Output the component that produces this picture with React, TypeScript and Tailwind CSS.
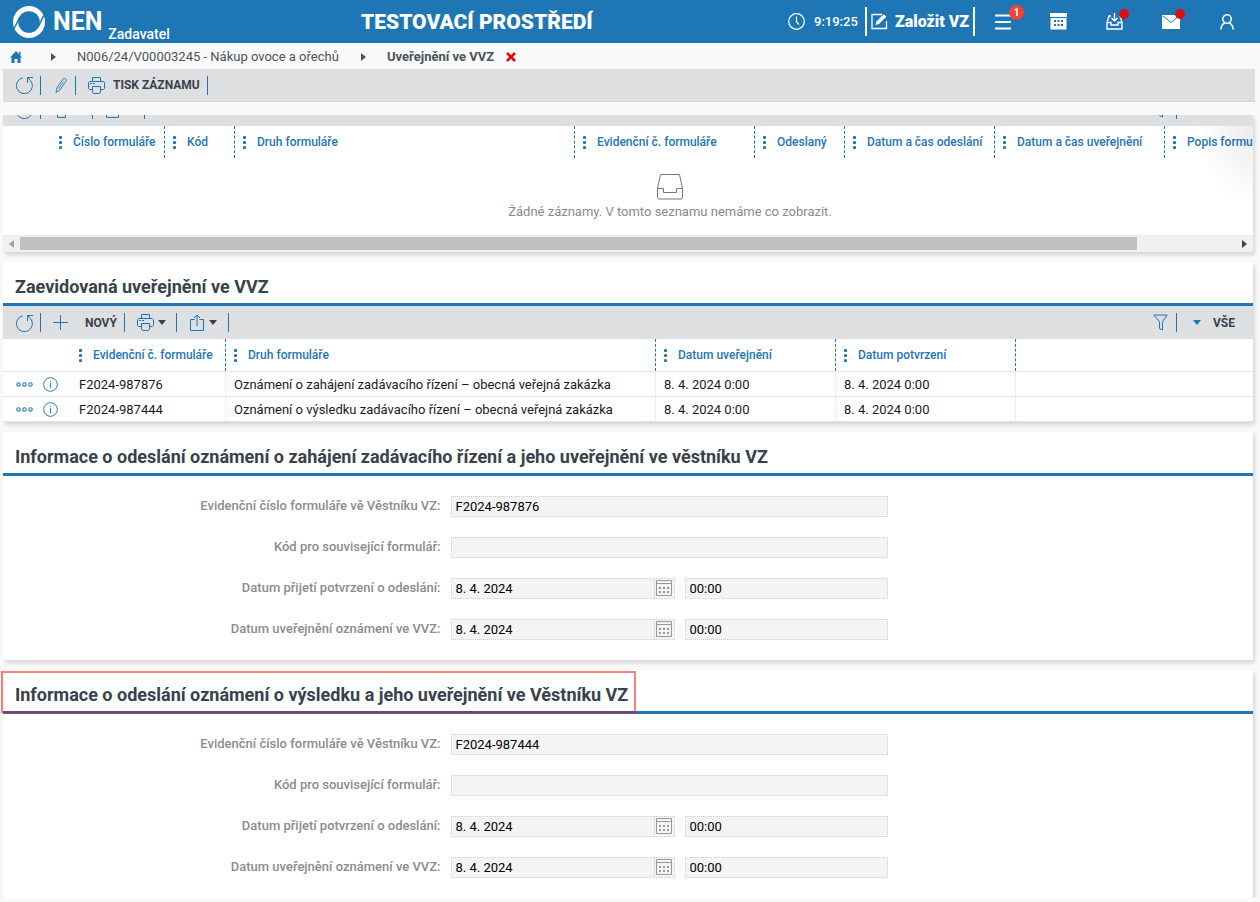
import React from "react";

type IconProps = { className?: string };

function RefreshIcon({ className = "" }: IconProps) {
  return (
    <svg width="18" height="18" viewBox="0 0 18 18" fill="none" stroke="currentColor" className={`shrink-0 ${className}`}>
      <path d="M6.6 1.9A8 8 0 1 0 14.2 4.2L11.5 1.5" />
      <path d="M17 1.5h-5.5v5.5" />
    </svg>
  );
}

function PencilIcon() {
  return (
    <svg width="12" height="17" viewBox="0 0 13 17" fill="none" stroke="currentColor" className="shrink-0">
      <path d="M1 16l1-4.8L8.6 1.6a1.9 1.9 0 0 1 2.8-.3 1.9 1.9 0 0 1 .3 2.7L5.2 13.4z" />
      <path d="M9.2 4.2L3.8 12" strokeWidth=".8" />
    </svg>
  );
}

function PrinterIcon() {
  return (
    <svg width="17" height="17" viewBox="0 0 17 17" fill="none" stroke="currentColor" className="shrink-0">
      <path d="M4.5 4.5v-4h8v4M4.5 12.5h-3l-1-1v-6l1-1h14l1 1v6l-1 1h-3" />
      <path d="M4.5 9.5h8v5.5l-1 1.5h-6l-1-1.500zM2 6.500h2M5 6.500h2" />
    </svg>
  );
}

function PlusIcon() {
  return (
    <svg width="15" height="15" viewBox="0 0 15 15" fill="none" stroke="currentColor" className="shrink-0">
      <path d="M7.5 0v15M0 7.5h15" />
    </svg>
  );
}

function ShareIcon() {
  return (
    <svg width="14" height="17" viewBox="0 0 14 17" fill="none" stroke="currentColor" className="shrink-0">
      <path d="M4.5 5.5H.5v11h13v-11h-4M7 12V1M4 4l3-3 3 3" />
    </svg>
  );
}

function FunnelIcon() {
  return (
    <svg width="15" height="17" viewBox="0 0 15 17" fill="none" stroke="currentColor" className="shrink-0">
      <path d="M.8 1h13.4L9.5 7.5v8.500l-3-1.500V7.500z" />
    </svg>
  );
}

function Caret({ className = "" }: IconProps) {
  return (
    <svg width="8" height="5" viewBox="0 0 8 5" className={`shrink-0 ${className}`} fill="currentColor">
      <path d="M0 0h8L4 5z" />
    </svg>
  );
}

function RightArrow({ className = "" }: IconProps) {
  return (
    <svg width="5" height="8" viewBox="0 0 5 8" className={`shrink-0 ${className}`} fill="currentColor">
      <path d="M0 0l5 4-5 4z" />
    </svg>
  );
}

function DotsHandle() {
  return (
    <svg width="3" height="13" viewBox="0 0 3 13" fill="currentColor" className="shrink-0">
      <circle cx="1.5" cy="1.5" r="1.6" />
      <circle cx="1.5" cy="6.5" r="1.6" />
      <circle cx="1.5" cy="11.5" r="1.6" />
    </svg>
  );
}

function Divider({ className = "" }: IconProps) {
  return <span className={`h-[19px] w-px shrink-0 bg-[#1e76b5] ${className}`} />;
}

function Header() {
  return (
    <header className="flex h-[43px] shrink-0 items-center bg-[#1e76b5] text-white">
      <a href="#" className="flex h-full w-[361px] items-center pl-3">
        <svg width="34" height="34" viewBox="0 0 34 34" className="shrink-0">
          <circle cx="17" cy="17" r="16" fill="#fff" />
          <circle cx="17" cy="17" r="10.8" fill="#1e76b5" />
          <path d="M1 24.500C4.500 21.500 4.500 17 8 12" stroke="#1e76b5" strokeWidth="1.400" fill="none" />
          <path d="M33 9.500C29.500 12.500 29.500 17 26 22" stroke="#1e76b5" strokeWidth="1.400" fill="none" />
        </svg>
        <span className="ml-[7px] text-[25px] font-bold leading-8">NEN</span>
        <span className="ml-1.5 mt-6 text-sm font-medium leading-5">Zadavatel</span>
      </a>
      <div className="whitespace-nowrap text-[21px] font-black leading-7">TESTOVACÍ PROSTŘEDÍ</div>
      <div className="ml-auto flex items-center">
        <svg width="17" height="17" viewBox="0 0 17 17" fill="none" stroke="#fff" strokeWidth="1.2">
          <circle cx="8.5" cy="8.5" r="7.8" />
          <path d="M8.5 3.5v5.5l2.5 2.5" />
        </svg>
        <span className="ml-[9px] w-[51px] whitespace-nowrap text-[13px] font-medium">9:19:25</span>
        <button className="flex h-[29px] w-[110px] items-center justify-between whitespace-nowrap border-x-2 border-white px-1 text-base font-black">
          <svg width="17" height="17" viewBox="0 0 17 17" className="shrink-0">
            <path d="M11 1.5H1v14h14.500V8" fill="none" stroke="#fff" strokeWidth="1.3" />
            <path d="M4.5 12l1-3.500L12.800 1.200l2.500 2.500L8 11z" fill="#fff" />
          </svg>
          Založit VZ
        </button>
        <button aria-label="Menu" className="relative ml-5 flex h-8 w-[17px] items-center">
          <svg width="17" height="16" viewBox="0 0 17 16" stroke="#fff" strokeWidth="1.8">
            <path d="M0 1.5h16M0 8h16M0 14.5h16" />
          </svg>
          <span className="absolute -top-px left-[14px] flex size-[15px] items-center justify-center rounded-full bg-[#f44336] text-[10px] font-bold">1</span>
        </button>
        <button aria-label="Kalendář" className="ml-[38px]">
          <svg width="17" height="17" viewBox="0 0 17 17" fill="#fff">
            <path d="M0 0h17v4H0zM.5 5h16v11.500H.5z" />
            <path d="M4 7h2v2H4zM7.500 7h2v2h-2zM11 7h2v2h-2zM4 11h2v2H4zM7.500 11h2v2h-2zM11 11h2v2h-2z" fill="#1e76b5" />
          </svg>
        </button>
        <button aria-label="Doručené" className="relative ml-[39px] w-[18px]">
          <svg width="18" height="17" viewBox="0 0 18 17" fill="none" stroke="#fff" strokeWidth="1.4">
            <path d="M5 3H3L1 9.500v6.500h15V9.500L14 3M1 9.500h4v2.500h7V9.500h4M8.500 0v8M5.500 5l3 3 3-3" />
          </svg>
          <span className="absolute -top-1 left-[13px] size-2.5 rounded-full bg-[#dc0d15]" />
        </button>
        <button aria-label="Zprávy" className="relative ml-[38px] w-[18px]">
          <svg width="18" height="14" viewBox="0 0 18 14">
            <path d="M0 0h18v14H0z" fill="#fff" />
            <path d="M1 1l8 6.500L17 1" fill="none" stroke="#1e76b5" />
          </svg>
          <span className="absolute -top-1.5 left-[13px] size-2.5 rounded-full bg-[#dc0d15]" />
        </button>
        <button aria-label="Uživatel" className="ml-10 mr-[26px]">
          <svg width="14" height="16" viewBox="0 0 14 16" fill="none" stroke="#fff" strokeWidth="1.5">
            <circle cx="7" cy="5" r="4.2" />
            <path d="M1 15.500c0-4 1.500-5.500 4-6.700M13 15.500c0-4-1.500-5.500-4-6.700" />
          </svg>
        </button>
      </div>
    </header>
  );
}

function Breadcrumb() {
  return (
    <nav className="flex h-[26px] shrink-0 items-center pt-0.5 text-[13px] text-[#4a545c]">
      <a href="#" aria-label="Domů" className="ml-2.5 text-[#1e76b5]">
        <svg width="12" height="12" viewBox="0 0 12 12" fill="currentColor">
          <path d="M6 0l6 6.500h-1.500V12h-3V8h-3v4h-3V6.500H0L6 0zM9 .8h1.500V5L9 3.500z" />
        </svg>
      </a>
      <RightArrow className="ml-[29px]" />
      <a href="#" className="ml-[21px] w-[263px] whitespace-nowrap">
        N006/24/V00003245 - Nákup ovoce a ořechů
      </a>
      <RightArrow className="ml-[21px]" />
      <span className="ml-[21px] w-[107px] whitespace-nowrap font-bold">Uveřejnění ve VVZ</span>
      <button aria-label="Zavřít" className="ml-3">
        <svg width="10" height="10" viewBox="0 0 10 10" stroke="#f00000" strokeWidth="2.6">
          <path d="M1 1l8 8M9 1L1 9" />
        </svg>
      </button>
    </nav>
  );
}

type Column = { label: string; width: string };

function HeaderCell({ label }: { label: string }) {
  return (
    <span className="flex items-center gap-[11px] whitespace-nowrap pl-2 text-xs font-medium text-[#1e76b5]">
      <DotsHandle />
      {label}
    </span>
  );
}

const sentColumns: Column[] = [
  { label: "Číslo formuláře", width: "w-[114px]" },
  { label: "Kód", width: "w-[70px]" },
  { label: "Druh formuláře", width: "w-[340px]" },
  { label: "Evidenční č. formuláře", width: "w-[180px]" },
  { label: "Odeslaný", width: "w-[90px]" },
  { label: "Datum a čas odeslání", width: "w-[150px]" },
  { label: "Datum a čas uveřejnění", width: "w-[170px]" },
  { label: "Popis formuláře", width: "w-[172px]" },
];

function SentForms() {
  return (
    <section className="relative bg-white shadow-[2px_3px_4px_rgba(0,0,0,0.14)]">
      <div className="flex h-[11px] items-end overflow-hidden bg-[#dedfe1]">
        <div className="flex h-[33px] w-full shrink-0 items-center pl-[13px] text-[#1e76b5]">
          <RefreshIcon />
          <Divider className="ml-1.5" />
          <svg width="9" height="17" viewBox="0 0 9 17" fill="none" stroke="currentColor" className="ml-4">
            <path d="M.5 0v16.500h8V0" />
          </svg>
          <Divider className="ml-[26px]" />
          <svg width="13" height="17" viewBox="0 0 13 17" fill="none" stroke="currentColor" className="ml-[13px]">
            <path d="M.5 0v16.500h12V0" />
          </svg>
          <Divider className="ml-[25px]" />
          <span className="ml-auto">
            <FunnelIcon />
          </span>
          <Divider className="ml-2 mr-[76px]" />
        </div>
      </div>
      <div className="overflow-hidden">
        <div className="w-[1334px]">
          <table className="w-full table-fixed border-separate border-spacing-0">
            <thead>
              <tr className="h-8">
                <th className="w-12 p-0" />
                {sentColumns.map((c) => (
                  <th key={c.label} className={`${c.width} border-r border-dashed border-[#1e76b5] p-0`}>
                    <HeaderCell label={c.label} />
                  </th>
                ))}
              </tr>
            </thead>
          </table>
          <div className="flex h-[77px] flex-col items-center pt-4 text-[13px] leading-4 text-[#8a8a8a]">
            <svg width="26" height="26" viewBox="0 0 26 26" fill="none" stroke="#777" className="mb-1 shrink-0">
              <path d="M.5 14.500L3.500.5h19l3 14v9l-1 1.500h-23l-1-1.500zM.5 14.500h6v4h13v-4h6" />
            </svg>
            <p>Žádné záznamy. V tomto seznamu nemáme co zobrazit.</p>
          </div>
        </div>
      </div>
      <div className="flex h-[17px] items-center bg-[#f0f0f0]">
        <RightArrow className="ml-1.5 mr-1.5 rotate-180 text-[#a0a0a0]" />
        <div className="flex-1">
          <div className="h-[13px] w-[92%] bg-[#c1c1c1]" />
        </div>
        <RightArrow className="ml-2 mr-1.5 text-[#404040]" />
      </div>
      <div className="pointer-events-none absolute right-0 top-[11px] h-20 w-14 bg-[radial-gradient(ellipse_at_top_right,rgba(0,0,0,0.08),transparent_70%)]" />
    </section>
  );
}

function SectionTitle({ children, marked = false }: { children: React.ReactNode; marked?: boolean }) {
  return (
    <h2 className="flex h-11 items-center border-b-3 border-[#1e76b5] pl-3 pt-2 text-lg font-bold text-[#37424c]">
      <span className="relative whitespace-nowrap">
        {children}
        {marked && <span className="absolute -bottom-1 -left-3.5 -right-2 -top-2.5 border-2 border-[#ff0000]/50" />}
      </span>
    </h2>
  );
}

const rows = [
  ["F2024-987876", "Oznámení o zahájení zadávacího řízení – obecná veřejná zakázka"],
  ["F2024-987444", "Oznámení o výsledku zadávacího řízení – obecná veřejná zakázka"],
];

const registeredColumns: Column[] = [
  { label: "Evidenční č. formuláře", width: "w-[155px]" },
  { label: "Druh formuláře", width: "w-[430px]" },
  { label: "Datum uveřejnění", width: "w-[180px]" },
  { label: "Datum potvrzení", width: "w-[180px]" },
];

function RegisteredForms() {
  return (
    <section className="bg-white shadow-[2px_3px_4px_rgba(0,0,0,0.14)]">
      <SectionTitle>Zaevidovaná uveřejnění ve VVZ</SectionTitle>
      <div className="flex h-[33px] items-center bg-[#dedfe1] pl-[13px] text-xs font-bold text-[#37424c]">
        <button aria-label="Obnovit" className="text-[#1e76b5]">
          <RefreshIcon />
        </button>
        <Divider className="ml-1.5" />
        <button className="ml-3 flex items-center gap-[17px]">
          <span className="text-[#1e76b5]">
            <PlusIcon />
          </span>
          NOVÝ
        </button>
        <Divider className="ml-[7px]" />
        <button aria-label="Tisk" className="ml-3 flex items-center gap-1">
          <span className="text-[#1e76b5]">
            <PrinterIcon />
          </span>
          <Caret />
        </button>
        <Divider className="ml-2.5" />
        <button aria-label="Export" className="ml-[13px] flex items-center gap-[5px]">
          <span className="text-[#1e76b5]">
            <ShareIcon />
          </span>
          <Caret />
        </button>
        <Divider className="ml-[11px]" />
        <button aria-label="Filtr" className="ml-auto text-[#1e76b5]">
          <FunnelIcon />
        </button>
        <Divider className="ml-2" />
        <button className="ml-4 mr-[18px] flex items-center gap-3">
          <Caret className="text-[#1e76b5]" />
          VŠE
        </button>
      </div>
      <table className="w-full table-fixed border-separate border-spacing-0 text-[13px] text-[#1a1a1a]">
        <thead>
          <tr className="h-[33px]">
            <th className="w-[68px] border-b border-[#dce7eb] p-0" />
            {registeredColumns.map((c) => (
              <th key={c.label} className={`${c.width} border-b border-[#dce7eb] p-0`}>
                <div className="flex h-8 items-center border-r border-dashed border-[#1e76b5]">
                  <HeaderCell label={c.label} />
                </div>
              </th>
            ))}
            <th className="border-b border-[#dce7eb] p-0" />
          </tr>
        </thead>
        <tbody>
          {rows.map(([id, kind]) => (
            <tr key={id} className="h-[25px]">
              <td className="border-b border-[#dce7eb] p-0">
                <span className="flex items-center gap-2.5 pl-[13px] text-[#1e76b5]">
                  <button aria-label="Akce">
                    <svg width="17" height="5" viewBox="0 0 17 5" fill="none" stroke="currentColor" strokeWidth="1.1">
                      <circle cx="2.5" cy="2.5" r="1.7" />
                      <circle cx="8.5" cy="2.5" r="1.7" />
                      <circle cx="14.5" cy="2.5" r="1.7" />
                    </svg>
                  </button>
                  <button aria-label="Detail">
                    <svg width="15" height="15" viewBox="0 0 16 16" fill="none" stroke="currentColor">
                      <circle cx="8" cy="8" r="7.3" />
                      <path d="M8 6.5v5.5M8 4v1.2" />
                    </svg>
                  </button>
                </span>
              </td>
              {[id, kind, "8. 4. 2024 0:00", "8. 4. 2024 0:00"].map((text, i) => (
                <td key={i} className="whitespace-nowrap border-b border-[#dce7eb] p-0">
                  <div className="flex h-6 items-center border-r border-dotted border-[#dce3e6] pl-2 pt-0.5">{text}</div>
                </td>
              ))}
              <td className="border-b border-[#dce7eb] p-0" />
            </tr>
          ))}
        </tbody>
      </table>
    </section>
  );
}

const box = "h-[21px] border border-dotted border-[#cfcfcf] bg-[#f4f4f4] px-1 text-[13px] text-black outline-none";

function CalendarIcon() {
  return (
    <svg width="16" height="16" viewBox="0 0 16 16" fill="none" stroke="#999">
      <path d="M.5.5h15v15H.5zM.5 3.500h15" />
      <path d="M3 8h10M3 12h10" strokeWidth="2" strokeDasharray="2 2" />
    </svg>
  );
}

function Field({ id, label, children }: { id: string; label: string; children: React.ReactNode }) {
  return (
    <div className="grid grid-cols-[35%_35%] gap-x-2.5">
      <label htmlFor={id} className="whitespace-nowrap text-right text-[13px] font-medium leading-5 text-[#8c8c8c]">
        {label}
      </label>
      {children}
    </div>
  );
}

function DateFields({ id }: { id: string }) {
  return (
    <div className="flex gap-2.5">
      <div className="flex w-[224px]">
        <input id={id} readOnly defaultValue="8. 4. 2024" className={`${box} min-w-0 flex-1 border-r-0`} />
        <button aria-label="Vybrat datum" className="flex h-[21px] w-[21px] items-start border border-dotted border-[#cfcfcf] bg-[#f4f4f4] pl-px pt-px">
          <CalendarIcon />
        </button>
      </div>
      <input aria-label="Čas" readOnly defaultValue="00:00" className={`${box} min-w-0 flex-1`} />
    </div>
  );
}

function NoticeSection({ id, title, number, marked }: { id: string; title: string; number: string; marked?: boolean }) {
  return (
    <section className="bg-white shadow-[2px_3px_4px_rgba(0,0,0,0.14)]">
      <SectionTitle marked={marked}>{title}</SectionTitle>
      <div className="flex flex-col gap-5 py-5">
        <Field id={`${id}-number`} label="Evidenční číslo formuláře vě Věstníku VZ:">
          <input id={`${id}-number`} readOnly defaultValue={number} className={box} />
        </Field>
        <Field id={`${id}-code`} label="Kód pro související formulář:">
          <input id={`${id}-code`} readOnly className={box} />
        </Field>
        <Field id={`${id}-received`} label="Datum přijetí potvrzení o odeslání:">
          <DateFields id={`${id}-received`} />
        </Field>
        <Field id={`${id}-published`} label="Datum uveřejnění oznámení ve VVZ:">
          <DateFields id={`${id}-published`} />
        </Field>
      </div>
    </section>
  );
}

export default function App() {
  return (
    <div className="flex h-screen flex-col overflow-hidden bg-[#f9f9f9] font-['Roboto',sans-serif]">
      <Header />
      <Breadcrumb />
      <div className="ml-[3px] mr-[5px] flex h-[33px] shrink-0 items-center border-b border-[#d4d5d7] bg-[#dedfe1] pl-[13px] text-xs font-bold text-[#37424c]">
        <button aria-label="Obnovit" className="text-[#1e76b5]">
          <RefreshIcon />
        </button>
        <Divider className="ml-1.5" />
        <button aria-label="Upravit" className="ml-3.5 text-[#1e76b5]">
          <PencilIcon />
        </button>
        <Divider className="ml-2" />
        <button className="ml-3 flex items-center gap-2">
          <span className="text-[#1e76b5]">
            <PrinterIcon />
          </span>
          TISK ZÁZNAMU
        </button>
        <Divider className="ml-[7px]" />
      </div>
      <main className="mb-1 mt-[13px] flex min-h-0 flex-1 flex-col gap-2.5 overflow-y-auto pl-[3px] pr-[7px] [scrollbar-width:none] *:shrink-0">
        <SentForms />
        <RegisteredForms />
        <NoticeSection
          id="opening"
          title="Informace o odeslání oznámení o zahájení zadávacího řízení a jeho uveřejnění ve věstníku VZ"
          number="F2024-987876"
        />
        <NoticeSection
          id="result"
          title="Informace o odeslání oznámení o výsledku a jeho uveřejnění ve Věstníku VZ"
          number="F2024-987444"
          marked
        />
      </main>
    </div>
  );
}
